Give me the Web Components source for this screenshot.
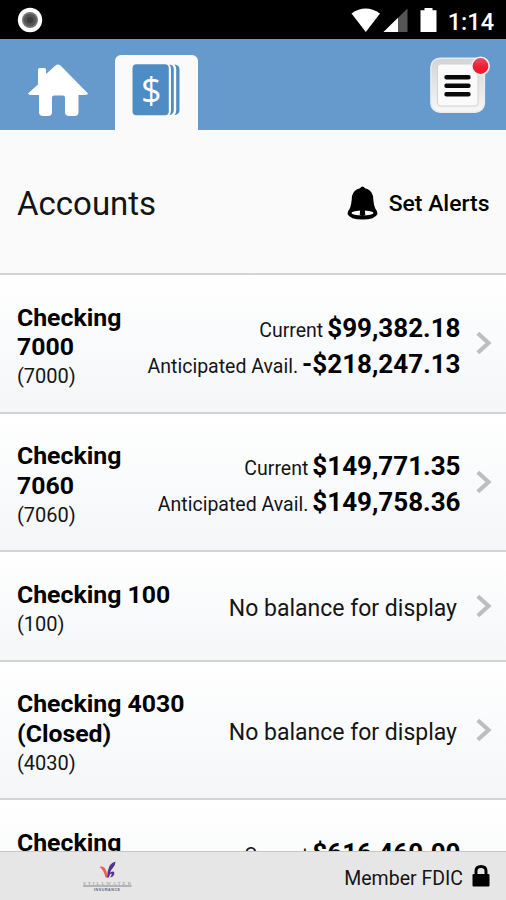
<!DOCTYPE html>
<html lang="en">
<head>
<meta charset="utf-8">
<title>Accounts</title>
<style>
body
{
  margin: 0;
  background: #fff;
  color: #151515;
  font-family: Roboto, "Liberation Sans", sans-serif;
}
</style>
</head>
<body>
<bank-app>
  <status-bar slot="top" time="1:14"></status-bar>
  <tab-bar slot="top"></tab-bar>
  <page-heading slot="top" action="Set Alerts">Accounts</page-heading>
  <account-row name="Checking 7000" number="(7000)" narrow>
    <balance-line label="Current" amount="$99,382.18"></balance-line>
    <balance-line label="Anticipated Avail." amount="-$218,247.13"></balance-line>
  </account-row>
  <account-row name="Checking 7060" number="(7060)" narrow>
    <balance-line label="Current" amount="$149,771.35"></balance-line>
    <balance-line label="Anticipated Avail." amount="$149,758.36"></balance-line>
  </account-row>
  <account-row name="Checking 100" number="(100)">No balance for display</account-row>
  <account-row name="Checking 4030 (Closed)" number="(4030)">No balance for display</account-row>
  <account-row name="Checking" narrow>
    <balance-line label="Current" amount="$616,460.00"></balance-line>
    <balance-line></balance-line>
  </account-row>
  <app-footer slot="bottom">Member FDIC</app-footer>
</bank-app>

<script>
(function() {
  // shared by all elements: clone the markup into an open shadow root
  class BaseElement extends HTMLElement {
    constructor() {
      super();
      const template = document.createElement("template");
      template.innerHTML = this.constructor.markup;
      this.attachShadow({ mode: "open" });
      this.shadowRoot.appendChild(template.content.cloneNode(true));
    }

    setText(selector, value) {
      this.shadowRoot.querySelector(selector).textContent = value || "";
    }
  }

  class BankApp extends BaseElement {}
  BankApp.markup = `
  <style>
:host
{
  display: flex;
  flex-direction: column;
  height: 100vh;
  overflow: hidden;
}
.list
{
  flex: 1;
  min-height: 0;
  overflow: hidden;
}
  </style>
  <slot name="top"></slot>
  <div class="list"><slot></slot></div>
  <slot name="bottom"></slot>
  `;

  class StatusBar extends BaseElement {
    connectedCallback() {
      this.setText(".time", this.getAttribute("time"));
    }
  }
  StatusBar.markup = `
  <style>
:host
{
  display: flex;
  align-items: center;
  flex: none;
  height: 39px;
  box-sizing: border-box;
  padding: 1px 12px 0 17px;
  background: #000;
  color: #fff;
}
svg
{
  display: block;
}
.record
{
  margin-right: auto;
}
.time
{
  margin-left: 11px;
  padding-top: 3px;
  font-size: 23.5px;
  font-weight: 500;
  line-height: 28px;
}
  </style>
  <svg class="record" width="26" height="26" viewBox="0 0 26 26">
    <circle cx="13" cy="13" r="12.2" fill="#fff"/>
    <circle cx="13" cy="13" r="8" fill="#777"/>
    <circle cx="13" cy="13" r="6.3" fill="#555"/>
    <circle cx="13" cy="13" r="3.2" fill="#3d3d3d"/>
  </svg>
  <svg width="86" height="26" viewBox="0 0 86 26">
    <path d="M0.5 6.5Q14.5-3.5 29 6.5L14.8 25Z" fill="#fff"/>
    <path d="M56.5 1.5V25H32.5Z" fill="#555"/>
    <path d="M47 10.8V25H32.5Z" fill="#fff"/>
    <path d="M69.5 3.3h4V1h8v2.3h4V25H69.5Z" fill="#fff"/>
  </svg>
  <span class="time"></span>
  `;

  class TabBar extends BaseElement {}
  TabBar.markup = `
  <style>
:host
{
  display: flex;
  align-items: flex-end;
  flex: none;
  height: 91px;
  box-sizing: border-box;
  padding: 0 16px 0 28px;
  background: #6699cc;
}
svg
{
  display: block;
}
.home
{
  padding-bottom: 13px;
}
.tab
{
  display: flex;
  justify-content: center;
  width: 82.5px;
  height: 75px;
  margin-left: 27px;
  box-sizing: border-box;
  padding-top: 9px;
  border-radius: 6px 6px 0 0;
  background: #fafafa;
}
.menu
{
  margin-left: auto;
  padding-bottom: 17px;
}
  </style>
  <svg class="home" width="60" height="53" viewBox="0 0 60 53">
    <path d="M10 5.5q0-1.5 1.5-1.5h5q1.5 0 1.5 1.5V10l9.5-8.6q2.5-2 5 0L60 29.5Q59 31 57 31H50.5v17q0 4-4 4H41q-4 0-4-4V33.5q0-2-2-2H26q-2 0-2 2V48q0 4-4 4H15q-4 0-4-4V31H3Q1 31 0 29.5L10 20.5Z" fill="#fff"/>
  </svg>
  <div class="tab">
    <svg width="48" height="52" viewBox="0 0 48 52">
      <rect x="0.5" y="0.3" width="36.3" height="51" rx="4" fill="#4d8cc4"/>
      <path d="M37.3 0.5q4.500 0.5 4.500 5V46q0 4.5-4.500 5.200q1.700-2 1.700-5V5.5q0-3-1.700-5Z" fill="#4d8cc4"/>
      <path d="M42.500 0.5q5 0.5 5 5V46q0 4.5-5 5.200q1.700-2 1.700-5V5.5q0-3-1.700-5Z" fill="#4d8cc4"/>
      <text x="19.200" y="38.5" text-anchor="middle" font-family="'Open Sans', sans-serif" font-size="36" fill="#fff" transform="matrix(1 0 0 1 0 0)">$</text>
    </svg>
  </div>
  <svg class="menu" width="60" height="58" viewBox="0 0 60 58">
    <defs>
      <linearGradient id="edge" x1="0" y1="0" x2="0" y2="1">
        <stop offset="0" stop-color="#d4d4d4"/>
        <stop offset="1" stop-color="#f7f7f7"/>
      </linearGradient>
      <linearGradient id="dot" x1="0" y1="0" x2="0" y2="1">
        <stop offset="0" stop-color="#e85068"/>
        <stop offset="0.6" stop-color="#ee1c2e"/>
      </linearGradient>
    </defs>
    <rect x="0.9" y="3.2" width="53.5" height="54" rx="9" fill="url(#edge)" stroke="#e8ebee" stroke-width="1.5"/>
    <rect x="7.5" y="9" width="40.5" height="42" rx="3" fill="#fafafa" stroke="#d2d2d2" stroke-width="1"/>
    <path d="M16.5 22.3H38.5M16.5 30.8H38.5M16.5 39.3H38.5" stroke="#080808" stroke-width="4.4" stroke-linecap="round"/>
    <circle cx="50.5" cy="11" r="8.7" fill="url(#dot)" stroke="#f6eff2" stroke-width="1.6"/>
  </svg>
  `;

  class PageHeading extends BaseElement {
    connectedCallback() {
      this.setText(".action", this.getAttribute("action"));
    }
  }
  PageHeading.markup = `
  <style>
:host
{
  display: flex;
  align-items: center;
  flex: none;
  height: 145px;
  box-sizing: border-box;
  padding: 5px 16.5px 0 17px;
  border-bottom: 2px solid #d2d3d4;
  background: #fafafa;
}
.title
{
  margin-right: auto;
  font-size: 33px;
  line-height: 40px;
}
svg
{
  display: block;
  margin: -2px 11px 0 0;
}
.action
{
  color: #000;
  font-size: 22.9px;
  font-weight: 500;
  line-height: 28px;
}
  </style>
  <span class="title"><slot></slot></span>
  <svg width="31" height="34" viewBox="0 0 31 34">
    <path d="M15.5 0.5Q17 0.5 18 2.3Q24.5 4 26 10Q26.5 19 28.5 23Q30.5 25 30.5 28Q28 33.5 15.5 33.5T0.5 28Q0.5 25 2.5 23Q4.5 19 5 10Q6.5 4 13 2.3Q14 0.5 15.5 0.5Z" fill="#000"/>
    <ellipse cx="15.5" cy="27" rx="11" ry="2.5" fill="#fafafa"/>
    <path d="M13.3 22.5h4.4l.6 6.5q-2.8 2-5.6 0Z" fill="#000"/>
  </svg>
  <span class="action"></span>
  `;

  class BalanceLine extends BaseElement {
    connectedCallback() {
      this.setText(".label", this.getAttribute("label"));
      this.setText(".amount", this.getAttribute("amount"));
    }
  }
  BalanceLine.markup = `
  <style>
:host
{
  display: flex;
  align-items: baseline;
  justify-content: flex-end;
  gap: 4px;
  height: 36px;
  line-height: 36px;
  white-space: nowrap;
}
.label
{
  font-size: 19.5px;
}
.amount
{
  color: #000;
  font-size: 26px;
  font-weight: 700;
}
  </style>
  <span class="label"></span>
  <span class="amount"></span>
  `;

  class AccountRow extends BaseElement {
    connectedCallback() {
      this.setText(".name", this.getAttribute("name"));
      this.setText(".number", this.getAttribute("number"));
    }
  }
  AccountRow.markup = `
  <style>
:host
{
  display: flex;
  align-items: center;
  box-sizing: border-box;
  padding: 27.5px 14px 20.4px 17px;
  border-bottom: 2px solid #d2d5d6;
  background: linear-gradient(#fff, #f4f6f8);
}
.account
{
  width: 180px;
  margin-right: auto;
}
:host([narrow]) .account
{
  width: 120px;
}
.name
{
  color: #000;
  font-size: 24.8px;
  font-weight: 700;
  line-height: 29.4px;
}
:host([narrow]) .name
{
  min-height: 58.8px;
}
.number
{
  height: 28px;
  padding-top: 2px;
  font-size: 20px;
  line-height: 27px;
}
.balance
{
  font-size: 23px;
  line-height: 28px;
  padding: 0 19px 2px 0;
}
:host([narrow]) .balance
{
  padding: 0 15.5px 2.500px 0;
}
svg
{
  display: block;
  margin-bottom: 7px;
}
  </style>
  <div class="account">
    <div class="name"></div>
    <div class="number"></div>
  </div>
  <div class="balance"><slot></slot></div>
  <svg width="16" height="24" viewBox="0 0 16 24">
    <path d="M1.8 2.3L12.5 12L1.8 21.7" fill="none" stroke="#bebebe" stroke-width="4.2"/>
  </svg>
  `;

  class AppFooter extends BaseElement {}
  AppFooter.markup = `
  <style>
:host
{
  display: flex;
  align-items: center;
  flex: none;
  height: 49px;
  box-sizing: border-box;
  padding: 0 16px 0 82px;
  border-top: 1px solid #c6c6c6;
  background: #e6e6e6;
}
svg
{
  display: block;
}
.logo
{
  margin-right: auto;
}
.text
{
  margin-right: 9px;
  padding-top: 4px;
  font-size: 19.5px;
  line-height: 23px;
}
  </style>
  <svg class="logo" width="50" height="32" viewBox="0 0 50 32">
    <path d="M17.5 6.8Q23 5 24.8 12.5L25.3 17.5H23.5Q21.5 9.5 17.5 6.8Z" fill="#e8604f"/>
    <path d="M33.5 1.8Q33.5 5 30.8 8Q28.5 10.5 28 12.5Q33 10 32.3 14Q31.5 17 27.8 17.5Q30.5 14.5 29.3 13.5Q28 13.5 26.8 17.5H25Q25 11 27.5 6Q29.5 2.5 33.5 1.8Z" fill="#57318c"/>
    <text x="1" y="24.5" textLength="48" font-family="'Liberation Serif', serif" font-size="5" fill="#8c8c8c">STILLWATER</text>
    <path d="M1 26.1H49.5" stroke="#a3a3a3" stroke-width="1.5"/>
    <text x="12" y="30.5" textLength="26" font-family="'Liberation Sans', sans-serif" font-size="3.6" font-weight="bold" fill="#62608a">INSURANCE</text>
  </svg>
  <span class="text"><slot></slot></span>
  <svg width="18" height="24" viewBox="0 0 18 24">
    <path d="M4 11V7Q4 2.5 9 2.5T14 7V11" fill="none" stroke="#000" stroke-width="3"/>
    <rect x="0.5" y="10" width="17" height="12.5" rx="1" fill="#000"/>
  </svg>
  `;

  window.customElements.define("bank-app", BankApp);
  window.customElements.define("status-bar", StatusBar);
  window.customElements.define("tab-bar", TabBar);
  window.customElements.define("page-heading", PageHeading);
  window.customElements.define("balance-line", BalanceLine);
  window.customElements.define("account-row", AccountRow);
  window.customElements.define("app-footer", AppFooter);
})();
</script>
</body>
</html>
